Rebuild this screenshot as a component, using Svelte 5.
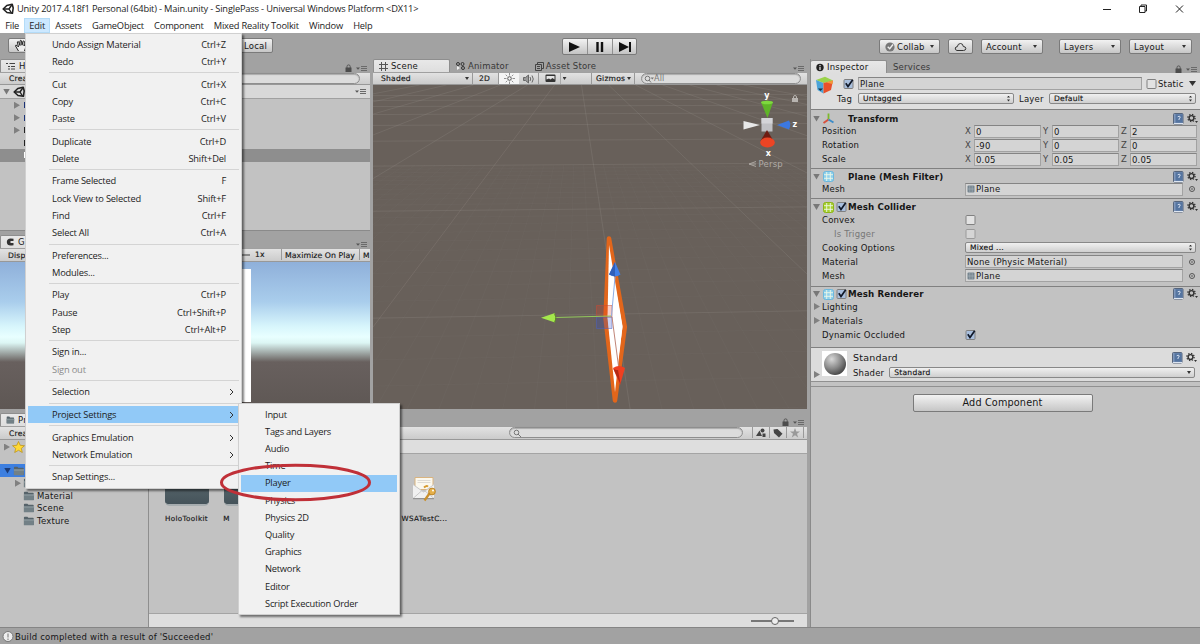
<script lang="ts">
	type MenuItem = { label: string; key?: string; sub?: boolean; off?: boolean; active?: boolean };

	const menubar = ['File', 'Edit', 'Assets', 'GameObject', 'Component', 'Mixed Reality Toolkit', 'Window', 'Help'];

	const editMenu: MenuItem[][] = [
		[{ label: 'Undo Assign Material', key: 'Ctrl+Z' }, { label: 'Redo', key: 'Ctrl+Y' }],
		[{ label: 'Cut', key: 'Ctrl+X' }, { label: 'Copy', key: 'Ctrl+C' }, { label: 'Paste', key: 'Ctrl+V' }],
		[{ label: 'Duplicate', key: 'Ctrl+D' }, { label: 'Delete', key: 'Shift+Del' }],
		[
			{ label: 'Frame Selected', key: 'F' },
			{ label: 'Lock View to Selected', key: 'Shift+F' },
			{ label: 'Find', key: 'Ctrl+F' },
			{ label: 'Select All', key: 'Ctrl+A' }
		],
		[{ label: 'Preferences...' }, { label: 'Modules...' }],
		[{ label: 'Play', key: 'Ctrl+P' }, { label: 'Pause', key: 'Ctrl+Shift+P' }, { label: 'Step', key: 'Ctrl+Alt+P' }],
		[{ label: 'Sign in...' }, { label: 'Sign out', off: true }],
		[{ label: 'Selection', sub: true }],
		[{ label: 'Project Settings', sub: true, active: true }],
		[{ label: 'Graphics Emulation', sub: true }, { label: 'Network Emulation', sub: true }],
		[{ label: 'Snap Settings...' }]
	];

	const settings = [
		'Input', 'Tags and Layers', 'Audio', 'Time', 'Player', 'Physics',
		'Physics 2D', 'Quality', 'Graphics', 'Network', 'Editor', 'Script Execution Order'
	];

	let selected = $state('Player');

	const transform = [
		{ name: 'Position', values: ['0', '0', '2'] },
		{ name: 'Rotation', values: ['-90', '0', '0'] },
		{ name: 'Scale', values: ['0.05', '0.05', '0.05'] }
	];

	// floor grid in perspective: every tenth line is a major one
	const horizon = 55;
	const rows = Array.from({ length: 96 }, (_, i) => {
		const n = i - 12;
		return { y: horizon + 1 / (0.0038 + 0.00026 * n), major: n % 10 === 0 };
	}).filter((r) => r.y > 88 && r.y < 425 && (r.major || r.y > 165));
	const cols = Array.from({ length: 121 }, (_, i) => {
		const n = i - 60;
		return { k: 0.15 + n * 0.09, major: n % 10 === 0 };
	});
</script>

{#snippet unity(size: number)}
	<svg width={size} height={size} viewBox="0 0 12 12">
		<path d="M1.200 6 4.800 2.500 10.200 1.200 11.200 5 10.400 10.300 5 9.500Z" fill="none" stroke="#222" stroke-width="1.600" stroke-linejoin="round" />
		<path d="M1.500 6h5.500M7 6l2.700-4M7 6l2.500 4" stroke="#222" stroke-width="1.400" fill="none" />
	</svg>
{/snippet}

{#snippet options()}
	<svg class="opts" width="11" height="7" viewBox="0 0 11 7">
		<path d="M0 2.500h4L2 4.800z" fill="#555" />
		<path d="M5 1.500h6M5 3.500h6M5 5.500h6" stroke="#6a6a6a" />
	</svg>
{/snippet}

{#snippet lock()}
	<svg class="lock" width="7" height="8" viewBox="0 0 7 8">
		<path d="M2 4V2.500a1.600 1.600 0 0 1 3.200 0V4" fill="none" stroke="#555" />
		<path d="M.5 3.500h6V8h-6z" fill="#4c4c4c" />
	</svg>
{/snippet}

{#snippet helpGear()}
	<svg class="help-gear" width="25" height="12" viewBox="0 0 25 12">
		<rect x=".5" y=".5" width="9.500" height="10.500" rx="1" fill="#8098bc" stroke="#56657c" />
		<rect x="2.500" y="1.300" width="7" height="8.400" fill="#5474a0" />
		<path d="M1 10.500h9" stroke="#dde5f0" />
		<path d="M4.700 3.800q1.700-1.200 2.500 0 .3 1-1.200 1.900V7" stroke="#e4ecf8" stroke-width=".9" fill="none" />
		<circle cx="18.500" cy="5" r="2.400" fill="none" stroke="#333" stroke-width="1.400" />
		<circle cx="18.500" cy="5" r="3.600" fill="none" stroke="#333" stroke-width="1.300" stroke-dasharray="1.400 1.430" />
		<path d="M22 8h3l-1.500 2z" fill="#333" />
	</svg>
{/snippet}

{#snippet check(on: boolean, off: boolean = false)}
	<svg class="check" class:faded={off} width="12" height="12" viewBox="0 0 12 12">
		<rect x="1" y="1.500" width="9" height="9" rx="1" fill={on ? '#a9bfdd' : '#e2e2e2'} stroke="#808080" />
		{#if on}
			<path d="M2.800 5.200 5 8.400 9.700 1.800" fill="none" stroke="#101828" stroke-width="1.700" />
		{/if}
	</svg>
{/snippet}

{#snippet mesh(color: string, line: string)}
	<svg class="mesh" width="11" height="11" viewBox="0 0 11 11">
		<rect x=".5" y=".5" width="10" height="10" rx="2" fill={color} stroke={line} />
		<path d="M3.700 1v9M7.300 1v9M1 3.700h9M1 7.300h9" stroke="#eef8e8" stroke-width=".9" />
	</svg>
{/snippet}

{#snippet meshSmall()}
	<svg width="8" height="8" viewBox="0 0 8 8">
		<rect x=".5" y=".5" width="7" height="7" rx="1" fill="#76858f" />
		<path d="M2.800 1v6M5.200 1v6M1 4h6" stroke="#a8b6be" stroke-width=".6" />
	</svg>
{/snippet}

{#snippet folder(cls: string)}
	<svg class={cls} viewBox="0 0 13 11" preserveAspectRatio="none">
		<path d="M1 10V1.500Q1 .7 1.800.7h3l1 1.300h5q.8 0 .8.8V10z" fill="#56636a" />
		<path d="M1 10.300V4h11l-.4 6.300z" fill="#728086" />
		<path d="M1 4.300h11" stroke="#a9b5b9" stroke-width=".8" />
	</svg>
{/snippet}

{#snippet bigFolder()}
	<svg width="46" height="30" viewBox="0 0 46 30">
		<defs>
			<linearGradient id="fold-face" x2="0" y2="1">
				<stop offset="0" stop-color="#5c6b70" />
				<stop offset="1" stop-color="#45535a" />
			</linearGradient>
		</defs>
		<path d="M1 4q0-3 3-3h12l3 4h23q3 0 3 3v17q0 3-3 3H4q-3 0-3-3z" fill="url(#fold-face)" />
		<path d="M2 27.500q1 1.500 3 1.500h36q2 0 3-1.500" fill="none" stroke="#8a979c" />
	</svg>
{/snippet}

{#snippet head(title: string)}
	<span class="fold"></span>
	<b>{title}</b>
	{@render helpGear()}
{/snippet}

<div class="window">
	<header class="titlebar">
		{@render unity(12)}
		<span class="caption">Unity 2017.4.18f1 Personal (64bit) - Main.unity - SinglePass - Universal Windows Platform &lt;DX11&gt;</span>
		<svg class="winbtns" width="90" height="18" viewBox="0 0 90 18">
			<path d="M0 9.500h8" stroke="#222" />
			<path d="M36.500 6.500h5.500v6h-5.500zM38 6.500v-1.500h5.500v6h-1.500M73 5.500l7 7M80 5.500l-7 7" fill="none" stroke="#222" />
		</svg>
	</header>
	<nav class="menubar">
		{#each menubar as m}
			<span class="m" class:open={m === 'Edit'}>{m}</span>
		{/each}
	</nav>

	<div class="toolbar">
		<div class="tool-left">
			<div class="btn hand">
				<svg width="14" height="13" viewBox="0 0 14 13">
					<path d="M4.500 12 1.500 7q0-1.500 1.500-.5L4.500 8 3.300 3q.8-1.300 1.500 0L6 6.500 6 1.800q.8-1 1.500 0L8 6.200l1-4q1-.7 1.400.3L10 7l1.700-2.500q1.200-.3 1 .8L10.500 12" fill="#eee" stroke="#222" />
				</svg>
			</div>
			<div class="btn local">Local</div>
		</div>
		<div class="play">
			<div><svg width="14" height="12"><path d="M1 1v10l11-5z" fill="#111" /></svg></div>
			<div><svg width="10" height="12"><path d="M2.500 1v10M7 1v10" stroke="#111" stroke-width="2.400" /></svg></div>
			<div><svg width="14" height="12"><path d="M1 1v10l10-5z" fill="#111" /><path d="M12 1v10" stroke="#111" stroke-width="2" /></svg></div>
		</div>
		<div class="tool-right">
			<div class="btn collab">
				<svg width="10" height="10"><circle cx="5" cy="5" r="4.600" fill="#777" /><path d="m2.700 4.800 2 2L8 2.500" fill="none" stroke="#eee" stroke-width="1.400" /></svg>
				Collab<i class="dd"></i>
			</div>
			<div class="btn cloud">
				<svg width="13" height="10"><path d="M3 8.500Q.8 8 1.300 6q.4-1.300 2-1.300Q3.800 1.500 6.500 1.500 9 1.500 9.300 4.500q2.500 0 2.500 2-.1 2-2.300 2z" fill="none" stroke="#333" /></svg>
			</div>
			<div class="btn account">Account<i class="dd"></i></div>
			<div class="btn layers">Layers<i class="dd"></i></div>
			<div class="btn layout">Layout<i class="dd"></i></div>
		</div>
	</div>

	<div class="workspace">
		<div class="docks">
			<div class="upper">
				<div class="left">
					<section class="hierarchy">
						<div class="tabs">
							<span class="tab hier-tab">
								<svg width="10" height="8"><path d="M0 1.500h2M3.500 1.500H9M2 4.500h2M5 4.500h4M2 7h2M5 7h4" stroke="#444" /></svg>
								H
							</span>
							<span class="tab-tools">{@render lock()}{@render options()}</span>
						</div>
						<div class="strip"><span class="create">Create</span><span class="search hs"></span></div>
						<div class="scene-row"><span class="fold"></span>{@render unity(12)}{@render options()}</div>
						<div class="tree">
							<div class="node"><i class="tri"></i><i class="stem"></i></div>
							<div class="node"><i class="tri"></i><i class="stem"></i></div>
							<div class="node"><i class="tri"></i><i class="stem dark"></i></div>
							<div class="node"><i class="stem dark leaf"></i></div>
							<div class="node on"><i class="stem leaf"></i></div>
						</div>
					</section>
					<section class="game">
						<div class="tabs">
							<span class="tab game-tab">
								<svg width="9" height="8"><path d="M7.500.8Q1-.8.8 4 1 8.800 7.500 7.200V5H4.500V3h3z" fill="#333" /></svg>
								G
							</span>
							<span class="tab-tools">{@render options()}</span>
						</div>
						<div class="strip game-strip">
							<span class="display">Display 1</span>
							<span class="scale"><i></i>1x</span>
							<span class="max">Maximize On Play</span>
							<span class="mute">M</span>
						</div>
						<div class="gameview"><div class="quad"></div></div>
					</section>
				</div>

				<section class="scene">
					<div class="tabs">
						<span class="tab scene-tab">
							<svg width="9" height="9"><path d="M2.500 0v9M6.500 0v9M0 2.500h9M0 6.500h9" stroke="#555" /></svg>
							Scene
						</span>
						<span class="tab idle">
							<svg width="10" height="8"><circle cx="2" cy="2" r="1.500" fill="none" stroke="#333" /><circle cx="6.500" cy="2" r="1.500" fill="none" stroke="#333" /><circle cx="7" cy="6" r="1.500" fill="none" stroke="#333" /><path d="M1 4v4l3-2z" fill="#eee" /></svg>
							Animator
						</span>
						<span class="tab idle store">
							<svg width="9" height="9"><path d="M.5 2.500h6v6h-6zM2.500 2.500v-2h6v6h-2M2 4.500h3M2 6.500h3" fill="none" stroke="#444" /></svg>
							Asset Store
						</span>
						<span class="tab-tools">{@render options()}</span>
					</div>
					<div class="strip scene-strip">
						<span class="shaded">Shaded<i class="dd"></i></span>
						<span class="twod">2D</span>
						<span class="light">
							<svg width="11" height="11"><circle cx="5.500" cy="5.500" r="1.800" fill="none" stroke="#555" /><path d="M5.500 0v2.500M5.500 8.500V11M0 5.500h2.500M8.500 5.500H11M1.700 1.700l1.600 1.600M7.700 7.700l1.600 1.600M9.300 1.700 7.700 3.300M3.300 7.700 1.700 9.300" stroke="#777" stroke-width=".8" /></svg>
						</span>
						<span class="audio">
							<svg width="12" height="10"><path d="M.5 3.500h2l3-2.500v8l-3-2.500h-2z" fill="#999" stroke="#666" /><path d="M7 3q1.500 2 0 4M9 1.500q2.500 3.500 0 7" fill="none" stroke="#666" /></svg>
						</span>
						<span class="image">
							<svg width="11" height="9"><rect x=".5" y=".5" width="10" height="7.500" rx="1" fill="#333" /><path d="M1.500 2h8v3.500L7.500 4 5.500 5.500 4 4.500l-2.500 1z" fill="#e4e4e4" /></svg>
						</span>
						<span class="fxdd"><i class="dd"></i></span>
						<span class="gap"></span>
						<span class="gizmos">Gizmos<i class="dd"></i></span>
						<span class="search ss">
							<svg width="10" height="8"><circle cx="3.500" cy="3.500" r="2.300" fill="none" stroke="#777" /><path d="m5 5 2 2.500" stroke="#777" /><path d="M6.500 2.500H10l-1.700 2z" fill="#777" /></svg>All
						</span>
					</div>
					<svg class="view" width="434" height="324" viewBox="373 85 434 324">
						<rect x="373" y="85" width="434" height="324" fill="#68605a" />
						<g stroke="#a29b95" fill="none">
							{#each rows as r}
								<path d="M373 {r.y}L807 {horizon + (r.y - horizon) * 0.972}" opacity={r.major ? 0.2 : 0.05} />
							{/each}
							{#each cols as c}
								<path
									d="M{577 + c.k * (c.major ? 30 : 110)} {c.major ? 85 : 165}L{577 + c.k * 370} 425"
									opacity={c.major ? 0.2 : 0.05}
								/>
							{/each}
						</g>
						<path d="M609 238.500 624.800 327 615 400.500 605.500 318Z" fill="#fff" stroke="#e2661b" stroke-width="4.500" stroke-linejoin="round" />
						<path d="M609 245 622.500 326 615 392 607.500 318Z" fill="#fff" />
						<path d="M596.500 305.500h15.500v11.500h-15.500z" fill="#e83e24" fill-opacity=".25" stroke="#c94835" stroke-opacity=".5" />
						<path d="M596.500 317h15.500v11.500h-15.500z" fill="#3048c8" fill-opacity=".25" stroke="#4a60c4" stroke-opacity=".5" />
						<path d="M555 317.500 611 316" stroke="#93c95c" />
						<path d="M541 317.800 555 313v9.500z" fill="#a4e84c" />
						<path d="M554.500 313.500 556 318l-1.500 4.500" fill="none" stroke="#5c8a28" />
						<path d="M611.500 316 615 277" stroke="#8eaee4" />
						<path d="M612 317 618.500 366" stroke="#c08578" />
						<path d="M615 262 609 274.500q6 4 11.500 0z" fill="#3f7fe8" />
						<path d="M615 262 609 274.500l6 2z" fill="#2f5fba" />
						<path d="M613 368q6-4 12 0l-5 17z" fill="#ef3f20" />
						<path d="M613 368q1 2 5 2l2.500 14z" fill="#b32b16" />

						<g>
							<path d="M743.500 121 760 125l-16.500 4.500z" fill="#e8e8e8" />
							<path d="M761 102q6-2.500 12 0l-5.500 16z" fill="#5fb428" />
							<ellipse cx="767" cy="102.500" rx="6" ry="1.800" fill="#7ed83e" />
							<path d="M777 125 789 120.500q2.500 4 0 9z" fill="#3c78e0" />
							<rect x="761.500" y="118" width="11" height="13.500" fill="#c0c0c4" />
							<path d="M761.500 118h11v5.500h-11z" fill="#d4d4d8" />
							<path d="m767 130-6.500 11h13z" fill="#6e1c12" />
							<ellipse cx="767.500" cy="142.500" rx="7.300" ry="5" fill="#ec4424" />
							<g class="axis" text-anchor="middle">
								<text x="767" y="98">y</text>
								<text x="795" y="127">z</text>
								<text x="768.500" y="156">x</text>
							</g>
							<path d="M756 161.500l-7 2.500 7 2.500M749 164h7" fill="none" stroke="#aaa5a0" />
							<text x="758.500" y="167" class="persp">Persp</text>
							<path d="M793.500 98V97q0-1.500 1.500-1.500t1.500 1.500v1" fill="none" stroke="#b8b4b0" />
							<path d="M792 98h6v4h-6z" fill="#b8b4b0" />
						</g>
					</svg>
				</section>
			</div>

			<section class="project">
				<div class="tabs">
					<span class="tab proj-tab">{@render folder('tab-folder')}Project</span>
					<span class="tab-tools">{@render lock()}{@render options()}</span>
				</div>
				<div class="strip proj-strip">
					<span class="create">Create</span>
					<span class="search ps">
						<svg width="9" height="8"><circle cx="3.500" cy="3.500" r="2.300" fill="none" stroke="#777" /><path d="m5 5 3 3" stroke="#777" /></svg>
					</span>
					<span class="pbtn"><svg width="10" height="9"><path d="M0 8 3.500 2.500 6 8z" fill="#444" /><circle cx="6.500" cy="2.500" r="2" fill="#444" /><path d="M6.500 5.500H9.500V9h-3z" fill="#444" /></svg></span>
					<span class="pbtn"><svg width="10" height="10"><path d="M.5 1.500 4.500 1 9.500 5.800 6 9.500 1 5z" fill="#444" /></svg></span>
					<span class="pbtn"><svg width="10" height="10"><path d="m5 0 1.300 3.500H10L7 5.800 8.200 9.500 5 7.300 1.800 9.500 3 5.800 0 3.500h3.700z" fill="#999" /></svg></span>
				</div>
				<div class="proj-body">
					<div class="folders">
						<div class="frow fav">
							<i class="tri"></i>
							<svg width="13" height="12" viewBox="0 0 13 12"><path d="m6.500.5 1.700 3.800 4.300.4-3.200 2.700 1 4.100-3.800-2.200-3.800 2.200 1-4.100L.5 4.700l4.300-.4z" fill="#ffd935" stroke="#b98e14" stroke-width=".7" /></svg>
						</div>
						<div class="frow assets"><span class="fold"></span>{@render folder('fi')}</div>
						<div class="frow child"><i class="tri"></i>{@render folder('fi')}</div>
						{#each ['Material', 'Scene', 'Texture'] as f}
							<div class="frow leafy">{@render folder('fi')}<span>{f}</span></div>
						{/each}
					</div>
					<div class="files">
						<div class="crumbs"></div>
						<div class="grid">
							<div class="file">{@render bigFolder()}<span>HoloToolkit</span></div>
							<div class="file second">{@render bigFolder()}<span>M</span></div>
							<div class="file cert">
								<svg width="25" height="26" viewBox="0 0 25 26">
									<path d="M3 1.500h18v12H3z" fill="#fbf8ee" stroke="#d9b480" />
									<path d="M5.500 4.500h13M5.500 6.500h13" stroke="#dedbd4" />
									<path d="M1 8.500 12 16l10-7.500V22H1z" fill="#f0f0f0" />
									<path d="M1 22.500 10 14.500M22 22.500 13 15M1 8.500 11.500 16 22 8.500" fill="none" stroke="#c8c8c8" />
									<path d="M1 22.700h21" stroke="#888" />
									<path d="M18.500 16 12.500 24.500" stroke="#c9902e" stroke-width="2.300" />
									<path d="M12 11.500q2.500-2.500 4-.8" fill="none" stroke="#d79a2e" stroke-width="1.800" />
									<circle cx="20" cy="15.500" r="3.400" fill="#e5b04a" stroke="#b47a1c" stroke-width=".8" />
									<circle cx="21" cy="14.500" r="1" fill="#fff" />
								</svg>
								<span>WSATestC...</span>
							</div>
						</div>
						<div class="zoombar"><div class="slider"><i></i></div></div>
					</div>
				</div>
			</section>
		</div>

		<section class="inspector">
			<div class="tabs">
				<span class="tab insp-tab">
					<svg width="8" height="9"><circle cx="4" cy="4.500" r="3.700" fill="#222" /><path d="M4 4v3M4 2v1.200" stroke="#eee" stroke-width="1.200" /></svg>
					Inspector
				</span>
				<span class="tab idle services">Services</span>
				<span class="tab-tools">{@render lock()}{@render options()}</span>
			</div>
			<div class="go-head">
				<svg class="cube" width="19" height="18" viewBox="0 0 19 18">
					<path d="M1 4 10 .8 18 4.500 8.500 7z" fill="#9ad24a" />
					<path d="M1 4 8.500 7v10.500L2.500 14z" fill="#4ba3d8" />
					<path d="M8.500 7 18 4.500 16 14 8.500 17.500z" fill="#e8502a" />
					<path d="M11 6.500 18 4.500 17.500 8z" fill="#f39a3a" />
					<path d="M3 12.500h5L5.500 15z" fill="#1c2c3c" />
				</svg>
				<div class="go-fields">
					<div class="go-row">
						{@render check(true)}
						<span class="field name">Plane</span>
						{@render check(false)}
						<span>Static</span><i class="dd bigdd"></i>
					</div>
					<div class="go-row">
						<span class="tag">Tag</span><span class="popup tagp">Untagged<i class="ud"></i></span>
						<span class="layer">Layer</span><span class="popup layp">Default<i class="ud"></i></span>
					</div>
				</div>
			</div>

			<div class="comp c-transform">
				<div class="head">
					<svg class="mesh" width="11" height="11"><path d="M5.500 6V.5" stroke="#7db82c" stroke-width="1.800" /><path d="M5.500 6.500.5 10" stroke="#d8503c" stroke-width="2" /><path d="M5.500 6.500 10.500 9.500" stroke="#3c8cc8" stroke-width="2" /></svg>
					{@render head('Transform')}
				</div>
				{#each transform as t}
					<div class="row">
						<span class="label">{t.name}</span>
						{#each t.values as v, i}
							<span class="ax">{'XYZ'[i]}</span><span class="field num">{v}</span>
						{/each}
					</div>
				{/each}
			</div>

			<div class="comp c-filter">
				<div class="head">{@render mesh('#8fd0ec', '#6cb8dc')}{@render head('Plane (Mesh Filter)')}</div>
				<div class="row">
					<span class="label">Mesh</span>
					<span class="field obj">{@render meshSmall()}Plane</span><i class="pick"></i>
				</div>
			</div>

			<div class="comp c-collider">
				<div class="head">{@render mesh('#a8d030', '#8cb418')}<span class="en">{@render check(true)}</span>{@render head('Mesh Collider')}</div>
				<div class="row"><span class="label">Convex</span>{@render check(false)}</div>
				<div class="row"><span class="label indent">Is Trigger</span>{@render check(false, true)}</div>
				<div class="row"><span class="label">Cooking Options</span><span class="popup wide">Mixed ...<i class="ud"></i></span></div>
				<div class="row"><span class="label">Material</span><span class="field obj">None (Physic Material)</span><i class="pick"></i></div>
				<div class="row">
					<span class="label">Mesh</span>
					<span class="field obj">{@render meshSmall()}Plane</span><i class="pick"></i>
				</div>
			</div>

			<div class="comp c-renderer">
				<div class="head">{@render mesh('#8fd0ec', '#6cb8dc')}<span class="en">{@render check(true)}</span>{@render head('Mesh Renderer')}</div>
				<div class="row"><i class="tri"></i><span class="label">Lighting</span></div>
				<div class="row"><i class="tri"></i><span class="label">Materials</span></div>
				<div class="row"><span class="label">Dynamic Occluded</span>{@render check(true)}</div>
			</div>

			<div class="material">
				<i class="tri"></i>
				<div class="ball"><i></i></div>
				<div class="mat-body">
					<div class="mat-title">Standard{@render helpGear()}</div>
					<div class="mat-row"><span>Shader</span><span class="popup shader">Standard<i class="dd"></i></span></div>
				</div>
			</div>
			<div class="add"><span class="btn addbtn">Add Component</span></div>
		</section>
	</div>

	<footer class="status">
		<svg width="12" height="12"><circle cx="6" cy="5.500" r="5" fill="#eee" stroke="#777" /><path d="M6 2.500v4M6 7.500V9" stroke="#888" stroke-width="1.200" /></svg>
		Build completed with a result of 'Succeeded'
	</footer>

	<div class="popmenu edit">
		{#each editMenu as group, g}
			{#if g > 0}<div class="sep"></div>{/if}
			{#each group as item}
				<div class="item" class:off={item.off} class:active={item.active}>
					<span>{item.label}</span>
					{#if item.key}<span>{item.key}</span>{/if}
					{#if item.sub}
						<svg class="chev" width="5" height="8"><path d="m1 1 3 3-3 3" fill="none" stroke="#333" /></svg>
					{/if}
				</div>
			{/each}
		{/each}
	</div>

	<div class="popmenu submenu">
		{#each settings as s}
			<!-- svelte-ignore a11y_click_events_have_key_events, a11y_no_static_element_interactions -->
			<div class="item" class:active={s === selected} onclick={() => (selected = s)}><span>{s}</span></div>
		{/each}
	</div>

	<svg class="marker" width="156" height="44" viewBox="0 0 156 44">
		<ellipse cx="77.500" cy="20.500" rx="74" ry="17.300" fill="none" stroke="#c03038" stroke-width="3" />
	</svg>
</div>

<style>
	:global(body) {
		overflow: hidden;
	}

	.window {
		position: relative;
		width: 1200px;
		height: 644px;
		overflow: hidden;
		display: flex;
		flex-direction: column;
		background: #a2a2a2;
		font: 8.5px/12px 'DejaVu Sans', Verdana, sans-serif;
		letter-spacing: 0.2px;
		color: #161616;
		white-space: nowrap;
	}

	.window * {
		box-sizing: border-box;
	}

	svg {
		display: block;
		flex: none;
	}

	i {
		display: block;
		flex: none;
	}

	.titlebar,
	.menubar,
	.popmenu {
		font-family: 'Open Sans', 'Noto Sans', sans-serif;
		font-size: 9.3px;
		letter-spacing: -0.18px;
		color: #1c1c1c;
	}

	.titlebar {
		height: 18px;
		background: #fff;
		display: flex;
		align-items: center;
		padding-left: 2px;
		gap: 3px;
	}

	.winbtns {
		margin-left: auto;
		margin-right: 7px;
	}

	.menubar {
		height: 15px;
		background: #fff;
		display: flex;
		letter-spacing: -0.2px;
	}

	.m {
		padding: 1px 5px 0 5.2px;
		line-height: 14px;
	}

	.m.open {
		background: #cce8ff;
		box-shadow: inset 0 0 0 1px #b4dcf8;
	}

	/* top toolbar */
	.toolbar {
		height: 26px;
		display: flex;
		justify-content: space-between;
		padding: 5px 8px 0 8px;
	}

	.btn {
		height: 15px;
		display: flex;
		align-items: center;
		background: linear-gradient(#f2f2f2, #c6c6c6);
		border: 1px solid #7a7a7a;
		border-radius: 2px;
		padding: 0 5px;
	}

	.tool-left,
	.tool-right {
		display: flex;
	}

	.hand {
		width: 30px;
	}

	.local {
		width: 63px;
		margin-left: 172px;
		justify-content: flex-end;
	}

	.play {
		display: flex;
		height: 17px;
		border: 1px solid #7a7a7a;
		border-radius: 2px;
		background: linear-gradient(#f2f2f2, #c4c4c4);
		margin-right: -47px;
	}

	.play div {
		width: 24.5px;
		display: grid;
		place-items: center;
	}

	.play div + div {
		border-left: 1px solid #909090;
	}

	.tool-right {
		padding-top: 1px;
	}

	.dd {
		width: 4px;
		height: 3px;
		background: #333;
		clip-path: polygon(0 0, 100% 0, 50% 100%);
		margin-left: auto;
	}

	.collab {
		width: 61px;
		gap: 2px;
		margin-right: 8px;
	}

	.cloud {
		width: 25px;
		margin-right: 8px;
	}

	.account {
		width: 62px;
		margin-right: 16px;
		padding-left: 4px;
	}

	.layers {
		width: 62px;
		margin-right: 8px;
		padding-left: 4px;
	}

	.layout {
		width: 63px;
		padding-left: 4px;
	}

	/* docks */
	.workspace {
		flex: 1;
		display: flex;
		gap: 3px;
		min-height: 0;
	}

	.docks {
		width: 807px;
		display: flex;
		flex-direction: column;
	}

	.upper {
		height: 350px;
		display: flex;
		gap: 3px;
	}

	.left {
		width: 370px;
		display: flex;
		flex-direction: column;
	}

	.tabs {
		height: 13px;
		display: flex;
		align-items: flex-end;
	}

	.tab {
		height: 13px;
		display: flex;
		align-items: center;
		gap: 3px;
		padding: 0 5px;
		background: linear-gradient(#e8e8e8, #dedede);
		border-radius: 2px 2px 0 0;
		border: 1px solid #8e8e8e;
		border-bottom: none;
	}

	.tab.idle {
		background: none;
		border-color: transparent;
		color: #383838;
	}

	.hier-tab,
	.game-tab {
		width: 60px;
	}

	.tab-tools {
		margin-left: auto;
		display: flex;
		align-items: flex-end;
		gap: 4px;
		padding-right: 3px;
	}

	.strip {
		height: 13px;
		display: flex;
		background: linear-gradient(#e2e2e2, #cbcbcb);
		border-top: 1px solid #a0a0a0;
		border-bottom: 1px solid #989898;
		font-size: 7.6px;
		line-height: 12px;
		-webkit-text-stroke: 0.15px #161616;
	}

	.strip > span {
		height: 11px;
	}

	.search {
		display: flex;
		align-items: center;
		border: 1px solid #8e8e8e;
		border-radius: 6px;
		background: #dcdcdc;
		box-shadow: inset 0 1px 1px #aaa;
		color: #777;
		-webkit-text-stroke: 0;
	}

	.hierarchy {
		height: 172px;
		background: #c2c2c2;
		border-bottom: 1px solid #8a8a8a;
	}

	.hierarchy .tabs,
	.game .tabs,
	.project .tabs {
		background: #a2a2a2;
	}

	.create {
		padding-left: 9px;
		width: 60px;
	}

	.hs {
		width: 290px;
		margin-left: 10px;
	}

	.scene-row {
		height: 14px;
		display: flex;
		align-items: center;
		gap: 3px;
		padding: 0 4px 0 3px;
		background: #d8d8d8;
		border-bottom: 1px solid #a0a0a0;
	}

	.scene-row :global(.opts) {
		margin-left: auto;
	}

	.fold {
		width: 7px;
		height: 6px;
		background: #787878;
		clip-path: polygon(0 0, 100% 0, 50% 100%);
		flex: none;
	}

	.tri {
		width: 6px;
		height: 7px;
		background: #808080;
		clip-path: polygon(0 0, 100% 50%, 0 100%);
	}

	.node {
		height: 12.5px;
		display: flex;
		align-items: center;
		gap: 4px;
		padding-left: 14px;
	}

	.stem {
		width: 1px;
		height: 6px;
		background: #1c3478;
	}

	.stem.dark {
		background: #222;
	}

	.stem.leaf {
		margin-left: 10px;
	}

	.node.on {
		background: #8e8e8e;
	}

	.node.on .stem {
		background: #fff;
	}

	.game {
		flex: 1;
		padding-top: 4px;
		display: flex;
		flex-direction: column;
	}

	.game-strip {
		height: 14px;
		line-height: 13px;
	}

	.display {
		width: 242px;
		padding-left: 8px;
	}

	.scale {
		width: 39px;
		display: flex;
		align-items: center;
		gap: 5px;
	}

	.scale i {
		width: 8px;
		height: 2px;
		background: #888;
	}

	.max {
		width: 78px;
		border-left: 1px solid #999;
		padding-left: 3px;
		font-size: 7.8px;
		letter-spacing: 0.05px;
	}

	.mute {
		width: 11px;
		border-left: 1px solid #999;
		padding-left: 3px;
	}

	.gameview {
		flex: 1;
		background: linear-gradient(#8fb0da 0%, #a9cdec 27%, #d8f6fc 44%, #e8ffff 51%, #dcf6f4 55%, #68605e 68%, #5e5754 100%);
		padding: 7px 0 0 25px;
	}

	.quad {
		width: 226px;
		height: 133px;
		background: #fff;
	}

	/* scene */
	.scene {
		width: 434px;
		display: flex;
		flex-direction: column;
	}

	.scene-tab {
		width: 77px;
		padding-left: 5px;
	}

	.scene .tab.idle {
		padding-left: 5px;
		gap: 2px;
	}

	.scene .tab.store {
		margin-left: 14px;
	}

	.shaded,
	.gizmos {
		display: flex;
		align-items: center;
	}

	.shaded {
		width: 98px;
		padding: 0 2px 0 8px;
	}

	.twod {
		width: 27px;
		border-left: 1px solid #999;
		border-right: 1px solid #999;
		padding-left: 6px;
		margin-left: 1px;
	}

	.light,
	.audio,
	.image,
	.fxdd {
		display: grid;
		place-items: center;
	}

	.light {
		width: 20px;
		background: #f4f4f4;
	}

	.audio {
		width: 20px;
		border-right: 1px solid #999;
	}

	.image {
		width: 20px;
		margin-left: 1px;
	}

	.fxdd {
		width: 8px;
		border-left: 1px solid #aaa;
	}

	.fxdd .dd {
		margin: 0;
	}

	.gap {
		width: 24px;
		border-right: 1px solid #999;
	}

	.gizmos {
		width: 43px;
		border-right: 1px solid #999;
		padding: 0 3px 0 4px;
		margin-right: 6px;
	}

	.ss {
		width: 160px;
		padding-left: 2px;
		font-size: 8px;
	}

	.axis {
		font: bold 8px 'DejaVu Sans', sans-serif;
		fill: #fff;
	}

	.persp {
		font: 8.5px 'DejaVu Sans', sans-serif;
		fill: #b0aba6;
	}

	/* project */
	.project {
		flex: 1;
		padding-top: 4px;
		display: flex;
		flex-direction: column;
	}

	.proj-tab {
		width: 60px;
	}

	.proj-strip {
		height: 14px;
		line-height: 13px;
	}

	.ps {
		width: 234px;
		margin-left: 449px;
		margin-right: 9px;
		padding-left: 3px;
	}

	.pbtn {
		width: 17px;
		display: grid;
		place-items: center;
		border-left: 1px solid #999;
	}

	.pbtn:last-child {
		width: 18px;
		border-right: 1px solid #999;
	}

	.window :global(.tab-folder) {
		width: 9px;
		height: 8px;
	}

	.proj-body {
		flex: 1;
		display: flex;
	}

	.folders {
		width: 149px;
		background: #c2c2c2;
		border-right: 1px solid #8e8e8e;
	}

	.frow {
		height: 12.5px;
		display: flex;
		align-items: center;
		gap: 2px;
		padding-left: 4px;
	}

	.window :global(.fi) {
		width: 12px;
		height: 10px;
	}

	.frow.fav {
		height: 14px;
		margin-bottom: 10px;
	}

	.frow.assets {
		background: #3d7fe0;
		height: 13px;
	}

	.assets .fold {
		background: #1c3c78;
	}

	.child {
		padding-left: 15px;
	}

	.leafy {
		padding-left: 23px;
	}

	.files {
		flex: 1;
		display: flex;
		flex-direction: column;
		background: #c2c2c2;
	}

	.crumbs {
		height: 14px;
		background: #dedede;
		border-bottom: 1px solid #a4a4a4;
	}

	.grid {
		flex: 1;
		display: flex;
		padding-top: 22px;
	}

	.file {
		width: 59px;
		margin-left: 8px;
		display: flex;
		flex-direction: column;
		align-items: center;
		font-size: 7.2px;
		letter-spacing: 0.35px;
		-webkit-text-stroke: 0.15px #161616;
	}

	.file span {
		margin-top: 7px;
	}

	.second {
		margin-left: 0;
	}

	.second span {
		margin-right: 48px;
		padding-left: 10px;
	}

	.cert {
		margin-left: 120px;
	}

	.cert svg {
		margin-bottom: 4px;
	}

	.zoombar {
		height: 14px;
		background: #dedede;
		border-top: 1px solid #a4a4a4;
		display: flex;
		justify-content: flex-end;
		align-items: center;
		padding-right: 13px;
	}

	.slider {
		width: 43px;
		height: 2px;
		background: #777;
		display: flex;
		align-items: center;
		padding-left: 20px;
	}

	.slider i {
		width: 8px;
		height: 8px;
		border-radius: 50%;
		background: #eee;
		border: 1px solid #666;
	}

	/* inspector */
	.inspector {
		flex: 1;
		background: #c2c2c2;
		border-left: 1px solid #8a8a8a;
	}

	.inspector .tabs {
		background: #a2a2a2;
		height: 14px;
	}

	.insp-tab {
		width: 76px;
		padding-left: 5px;
		border-left: none;
	}

	.go-head {
		height: 36px;
		background: #dedede;
		display: flex;
		padding: 3px 4px 0 4px;
		gap: 9px;
	}

	.go-fields {
		flex: 1;
	}

	.go-row {
		height: 15px;
		display: flex;
		align-items: center;
	}

	.field {
		height: 13px;
		line-height: 12px;
		border: 1px solid #a2a2a2;
		border-top-color: #848484;
		background: #d4d4d4;
		padding-left: 1px;
	}

	.name {
		width: 284px;
		margin: 0 4px 0 3px;
	}

	.bigdd {
		width: 7px;
		height: 5px;
		margin-left: auto;
	}

	.popup {
		height: 11px;
		line-height: 10px;
		display: flex;
		align-items: center;
		font-size: 7.6px;
		background: linear-gradient(#f0f0f0, #cfcfcf);
		border: 1px solid #888;
		border-radius: 2px;
		padding: 0 3px 0 4px;
		-webkit-text-stroke: 0.15px #161616;
	}

	.tag {
		width: 21px;
		margin-left: -6px;
	}

	.tagp {
		width: 156px;
	}

	.layer {
		margin: 0 4px 0 5px;
		width: 26px;
	}

	.layp {
		flex: 1;
	}

	.ud {
		margin-left: auto;
		width: 3px;
		height: 6px;
		background: #333;
		clip-path: polygon(50% 0, 100% 35%, 0 35%, 0 65%, 100% 65%, 50% 100%, 0 65%, 0 35%);
	}

	.comp {
		border-top: 1px solid #808080;
	}

	.c-transform {
		height: 59px;
		padding-top: 1px;
	}

	.c-filter {
		height: 30px;
	}

	.c-collider {
		height: 87.5px;
		padding-top: 0.5px;
	}

	.c-renderer {
		height: 61.5px;
	}

	.head {
		height: 13px;
		padding: 2px 2px 0 2px;
		display: flex;
		align-items: center;
	}

	.head .fold {
		order: -1;
		margin-right: 3px;
	}

	.head b {
		order: 1;
		margin-left: 14px;
		font-size: 8.7px;
		letter-spacing: 0.1px;
	}

	.head .en {
		margin-left: 2px;
		width: 12px;
	}

	.head .en ~ b {
		margin-left: 0;
	}

	.head :global(.help-gear) {
		order: 2;
		margin-left: auto;
	}

	.row {
		height: 14px;
		display: flex;
		align-items: center;
		padding-left: 11px;
	}

	.row .tri {
		margin: 0 2px 0 -8px;
	}

	.label {
		width: 143px;
		flex: none;
	}

	.indent {
		padding-left: 12px;
		color: #777;
	}

	.faded {
		opacity: 0.6;
	}

	.ax {
		width: 9px;
		color: #444;
	}

	.num {
		width: 67px;
		margin-right: 2px;
	}

	.obj {
		width: 218px;
		display: flex;
		align-items: center;
		gap: 1px;
	}

	.wide {
		width: 231px;
	}

	.pick {
		width: 6px;
		height: 6px;
		border: 1px solid #555;
		border-radius: 50%;
		margin-left: 6px;
		background: radial-gradient(#666 0 0.5px, transparent 1px);
	}

	.material {
		height: 35px;
		background: #dcdcdc;
		border-top: 1px solid #808080;
		border-bottom: 1px solid #909090;
		display: flex;
		padding: 3px 5px 0 3px;
	}

	.material > .tri {
		align-self: flex-end;
		margin: 0 2px 3px 0;
	}

	.ball {
		width: 25px;
		height: 25px;
		background: #fff;
		display: grid;
		place-items: center;
		margin-right: 6px;
	}

	.ball i {
		width: 22px;
		height: 22px;
		border-radius: 50%;
		background: radial-gradient(circle at 35% 28%, #d8d8d8, #888 45%, #222 95%);
	}

	.mat-body {
		flex: 1;
	}

	.mat-title {
		height: 14px;
		display: flex;
		align-items: center;
		justify-content: space-between;
		font-size: 9.5px;
		margin-right: -2px;
	}

	.mat-row {
		height: 15px;
		display: flex;
		align-items: center;
		gap: 5px;
	}

	.shader {
		flex: 1;
	}

	.add {
		margin-top: 4px;
		border-top: 1px solid #909090;
		padding-top: 7px;
		display: flex;
		justify-content: center;
	}

	.addbtn {
		width: 180px;
		height: 18px;
		justify-content: center;
		font-size: 9.7px;
		letter-spacing: 0.15px;
		margin-right: 6px;
	}

	.status {
		height: 17px;
		border-top: 1px solid #858585;
		display: flex;
		align-items: center;
		gap: 1px;
		padding: 1px 0 0 2px;
		font-size: 8.5px;
	}

	/* drop-down menus */
	.popmenu {
		position: absolute;
		background: #f1f1f1;
		border: 1px solid #d0d0d0;
		box-shadow: 2px 2px 2px rgba(0, 0, 0, 0.5);
	}

	.edit {
		left: 25px;
		top: 33px;
		width: 217px;
		height: 456px;
		padding: 2.1px 2px;
	}

	.submenu {
		left: 238px;
		top: 403px;
		width: 162px;
		height: 212px;
		padding: 2.1px 2px;
		letter-spacing: -0.22px;
	}

	.item {
		height: 17.2px;
		display: flex;
		align-items: center;
		justify-content: space-between;
		padding: 0 13px 0 24px;
		color: #1c1c1c;
	}

	.item .chev {
		margin-right: -8px;
	}

	.item.active {
		background: #91c9f7;
	}

	.item.off {
		color: #8a8a8a;
	}

	.sep {
		height: 5.46px;
		margin-left: 21px;
		background: linear-gradient(#d4d4d4, #d4d4d4) 0 2px / 100% 1px no-repeat;
	}

	.marker {
		position: absolute;
		left: 218px;
		top: 462px;
	}
</style>
